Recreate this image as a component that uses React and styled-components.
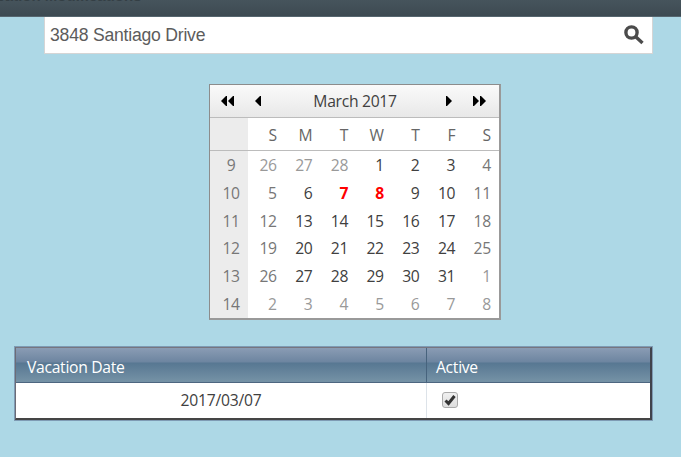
import { useState } from 'react';
import styled, { createGlobalStyle, css } from 'styled-components';

const GlobalStyle = createGlobalStyle`
    * {
        box-sizing: border-box;
    }
    body {
        margin: 0;
        background: #add8e6;
        overflow: hidden;
        font-family: "Open Sans", "Noto Sans", sans-serif;
    }
`

const Page = styled.div`
    height: 457px;
    display: flex;
    flex-direction: column;
    overflow: hidden;
`

const TitleBar = styled.header`
    height: 17px;
    flex: none;
    overflow: hidden;
    background: linear-gradient(#46545c, #3d4a52);
    border-bottom: 1px solid #56666f;
`

const Title = styled.h1`
    margin: -15px 0 0 -21px;
    font: bold 15px/22px "Liberation Sans", Arial, sans-serif;
    color: #343f45;
    white-space: nowrap;
`

const SearchBox = styled.div`
    flex: none;
    display: flex;
    align-items: center;
    justify-content: space-between;
    width: 609px;
    height: 37px;
    margin-left: 44px;
    padding: 0 8px 0 5px;
    background: #fff;
    border: 1px solid #d5d5d5;
    border-top: 0;
`

const SearchInput = styled.input`
    flex: 1;
    padding: 0;
    border: 0;
    outline: 0;
    color: #5c5c5c;
    font: 17.6px "Liberation Sans", Arial, sans-serif;
    letter-spacing: -0.22px;
`

const SearchButton = styled.button`
    display: flex;
    padding: 0;
    border: 0;
    background: none;
`

const CalendarBox = styled.div`
    flex: none;
    width: 292px;
    height: 236px;
    margin: 30px 0 0 209px;
    background: #fff;
    border: 1px solid;
    border-width: 1px 2px 2px 1px;
    border-color: #8c8c8c #999 #999 #8c8c8c;
`

const CalendarBar = styled.div`
    display: flex;
    align-items: center;
    height: 33px;
    padding: 0 13px 1px 11px;
    background: linear-gradient(#fafafa, #e8e8e8);
    border-bottom: 1px solid #bcbcbc;
`

const MonthLabel = styled.span`
    flex: 1;
    text-align: center;
    font-size: 15.7px;
    letter-spacing: -0.3px;
    padding-left: 3px;
    color: #404040;
`

const NavButton = styled.button`
    display: flex;
    padding: 0;
    border: 0;
    background: none;
    margin: ${props => props.$margin || 0};
`

const Week = styled.div`
    display: grid;
    grid-template-columns: 38px repeat(7, 35.7px);
    grid-template-rows: 100%;
    height: ${props => (props.$head ? '33px' : '27.8px')};
    line-height: ${props => (props.$head ? '34px' : '29px')};
    border-bottom: ${props => (props.$head ? '1px solid #bcbcbc' : '0')};
    font-size: 15.7px;
    letter-spacing: -0.35px;
    text-align: right;
`

const WeekNumber = styled.span`
    padding-left: 4px;
    text-align: center;
    background: #ececec;
    color: #777;
`

const dayColors = {
    other: '#999',
    weekend: '#777',
    normal: '#404040',
    head: '#666',
    selected: '#f00',
}

const Day = styled.span`
    padding-right: 7px;
    color: ${props => dayColors[props.$kind]};
    ${props => props.$kind === 'selected' && css`
        font-weight: bold;
    `}
`

const Grid = styled.div`
    flex: none;
    width: 639px;
    margin: 26px 0 0 14px;
    border: 1px solid #7e9bb4;
`

const GridInner = styled.div`
    border: 1px solid;
    border-width: 1px 2px 2px 1px;
    border-color: #77757f #40434c #454545 #6c6c76;
`

const GridRow = styled.div`
    display: grid;
    grid-template-columns: 411px 1fr;
    height: 35px;
    background: #fff;
`

const GridHead = styled(GridRow)`
    height: 35px;
    grid-template-rows: 100%;
    color: #fff;
    background: linear-gradient(#8a9cb4 0, #6d85a0 14px, #577792 15px, #7491a5 33px);
    border-bottom: 1px solid #4d6680;
`

const HeadCell = styled.div`
    padding-left: ${props => (props.$first ? 11 : 9)}px;
    border-right: ${props => (props.$first ? '1px solid #47637d' : '0')};
    font-size: 15.7px;
    line-height: 38px;
    letter-spacing: -0.3px;
`

const Cell = styled.div`
    display: flex;
    align-items: center;
    justify-content: ${props => (props.$center ? 'center' : 'flex-start')};
    padding: 0 0 1px ${props => (props.$center ? 0 : 15)}px;
    border-right: ${props => (props.$center ? '1px solid #dde3e9' : '0')};
    font-size: 15.7px;
    letter-spacing: -0.25px;
    color: #404040;
`

const Check = styled.button`
    display: flex;
    align-items: center;
    justify-content: center;
    width: 16px;
    height: 16px;
    padding: 0;
    border: 1px solid #aaa;
    border-radius: 3px;
    background: linear-gradient(#f0f0f0, #dedede);
`

const weeks = [
    { number: 9, days: [26, 27, 28, 1, 2, 3, 4] },
    { number: 10, days: [5, 6, 7, 8, 9, 10, 11] },
    { number: 11, days: [12, 13, 14, 15, 16, 17, 18] },
    { number: 12, days: [19, 20, 21, 22, 23, 24, 25] },
    { number: 13, days: [26, 27, 28, 29, 30, 31, 1] },
    { number: 14, days: [2, 3, 4, 5, 6, 7, 8] },
]

const vacationDays = [7, 8]

function dayKind(day, column, row) {
    if ((row === 0 && day > 20) || (row > 3 && day < 10)) {
        return 'other'
    }
    if (vacationDays.includes(day)) {
        return 'selected'
    }
    return (column === 0 || column === 6) ? 'weekend' : 'normal'
}

function Arrow({ double, right }) {
    return (
        <svg width={double ? 13 : 6} height="10" viewBox={double ? '0 0 13 10' : '0 0 6 10'}>
            <g transform={right ? `translate(${double ? 13 : 6} 0) scale(-1 1)` : undefined}>
                <path d="M5 0h1v10H5L0 5z" />
                {double && <path d="M12 0h1v10h-1L7 5z" />}
            </g>
        </svg>
    )
}

function Calendar() {
    return (
        <CalendarBox>
            <CalendarBar>
                <NavButton aria-label="Previous year"><Arrow double /></NavButton>
                <NavButton aria-label="Previous month" $margin="0 0 0 21px"><Arrow /></NavButton>
                <MonthLabel>March 2017</MonthLabel>
                <NavButton aria-label="Next month" $margin="0 21px 0 0"><Arrow right /></NavButton>
                <NavButton aria-label="Next year"><Arrow double right /></NavButton>
            </CalendarBar>
            <Week $head>
                <WeekNumber />
                {['S', 'M', 'T', 'W', 'T', 'F', 'S'].map((name, i) => <Day key={i} $kind="head">{name}</Day>)}
            </Week>
            {weeks.map((week, row) => (
                <Week key={week.number}>
                    <WeekNumber>{week.number}</WeekNumber>
                    {week.days.map((day, i) => <Day key={i} $kind={dayKind(day, i, row)}>{day}</Day>)}
                </Week>
            ))}
        </CalendarBox>
    )
}

function App() {
    const [address, setAddress] = useState('3848 Santiago Drive');
    const [active, setActive] = useState(true);

    return (
        <Page>
            <GlobalStyle />
            <TitleBar>
                <Title>Vacation Modifications</Title>
            </TitleBar>
            <SearchBox>
                <SearchInput value={address} onChange={e => setAddress(e.target.value)} />
                <SearchButton aria-label="Search">
                    <svg width="20" height="20" viewBox="0 0 20 20" fill="none" stroke="#4b4b4b">
                        <circle cx="7.5" cy="7.5" r="5.6" strokeWidth="3.4" />
                        <path d="M12 12l6.5 6" strokeWidth="3.4" />
                    </svg>
                </SearchButton>
            </SearchBox>
            <Calendar />
            <Grid>
                <GridInner>
                    <GridHead>
                        <HeadCell $first>Vacation Date</HeadCell>
                        <HeadCell>Active</HeadCell>
                    </GridHead>
                    <GridRow>
                        <Cell $center>2017/03/07</Cell>
                        <Cell>
                            <Check role="checkbox" aria-checked={active} onClick={() => setActive(!active)}>
                                {active && (
                                    <svg width="12" height="12" viewBox="0 0 12 12" fill="none" stroke="#333" strokeWidth="3">
                                        <path d="M1.5 6.5l3 3L10.5 2" />
                                    </svg>
                                )}
                            </Check>
                        </Cell>
                    </GridRow>
                </GridInner>
            </Grid>
        </Page>
    )
}

export default App;
